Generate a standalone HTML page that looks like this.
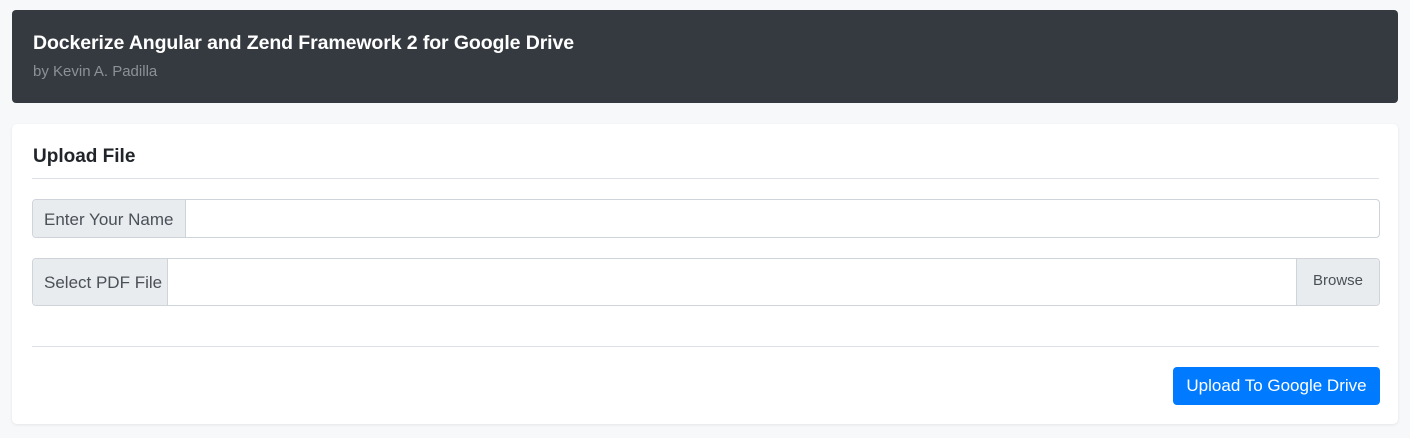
<!DOCTYPE html>
<html><head><style>
*{box-sizing:border-box;margin:0;padding:0}
body{width:1410px;height:438px;background:#f7f8fa;font-family:"Liberation Sans",sans-serif;position:relative;overflow:hidden}
.hdr{position:absolute;left:12px;top:10px;width:1386px;height:93px;background:#343a40;border-radius:4px}
.hdr h1{position:absolute;left:21px;top:22px;font-size:19.5px;font-weight:bold;color:#fff;letter-spacing:-0.1px}
.hdr p{position:absolute;left:21px;top:53px;font-size:15px;color:#8b9196}
.card{position:absolute;left:12px;top:124px;width:1386px;height:300px;background:#fff;border-radius:5px;box-shadow:0 1px 3px rgba(0,0,0,.08)}
.t{position:absolute;left:21px;top:22px;font-size:19px;font-weight:bold;color:#212529}
.hr{position:absolute;left:20px;width:1347px;height:1px;background:#dee2e6}
.ig{position:absolute;left:20px;width:1348px;border:1px solid #ced4da;border-radius:4px;overflow:hidden;background:#fff}
.lb{position:absolute;left:0;top:0;bottom:0;background:#e9ecef;border-right:1px solid #ced4da;color:#495057;font-size:17px;display:flex;align-items:center;padding-left:11px;padding-top:2px}
.br{position:absolute;right:0;top:0;bottom:0;width:83px;background:#e9ecef;border-left:1px solid #ced4da;color:#495057;font-size:15px;display:flex;align-items:center;justify-content:center;padding-bottom:4px}
.btn{position:absolute;left:1161px;top:243px;width:207px;height:38px;background:#007bff;border-radius:4px;color:#fff;font-size:17px;display:flex;align-items:center;justify-content:center}
</style></head><body>
<div class="hdr"><h1>Dockerize Angular and Zend Framework 2 for Google Drive</h1><p>by Kevin A. Padilla</p></div>
<div class="card">
<div class="t">Upload File</div>
<div class="hr" style="top:54px"></div>
<div class="ig" style="top:75px;height:39px"><div class="lb" style="width:153px">Enter Your Name</div></div>
<div class="ig" style="top:134px;height:48px"><div class="lb" style="width:135px">Select PDF File</div><div class="br">Browse</div></div>
<div class="hr" style="top:222px"></div>
<div class="btn">Upload To Google Drive</div>
</div>
</body></html>
